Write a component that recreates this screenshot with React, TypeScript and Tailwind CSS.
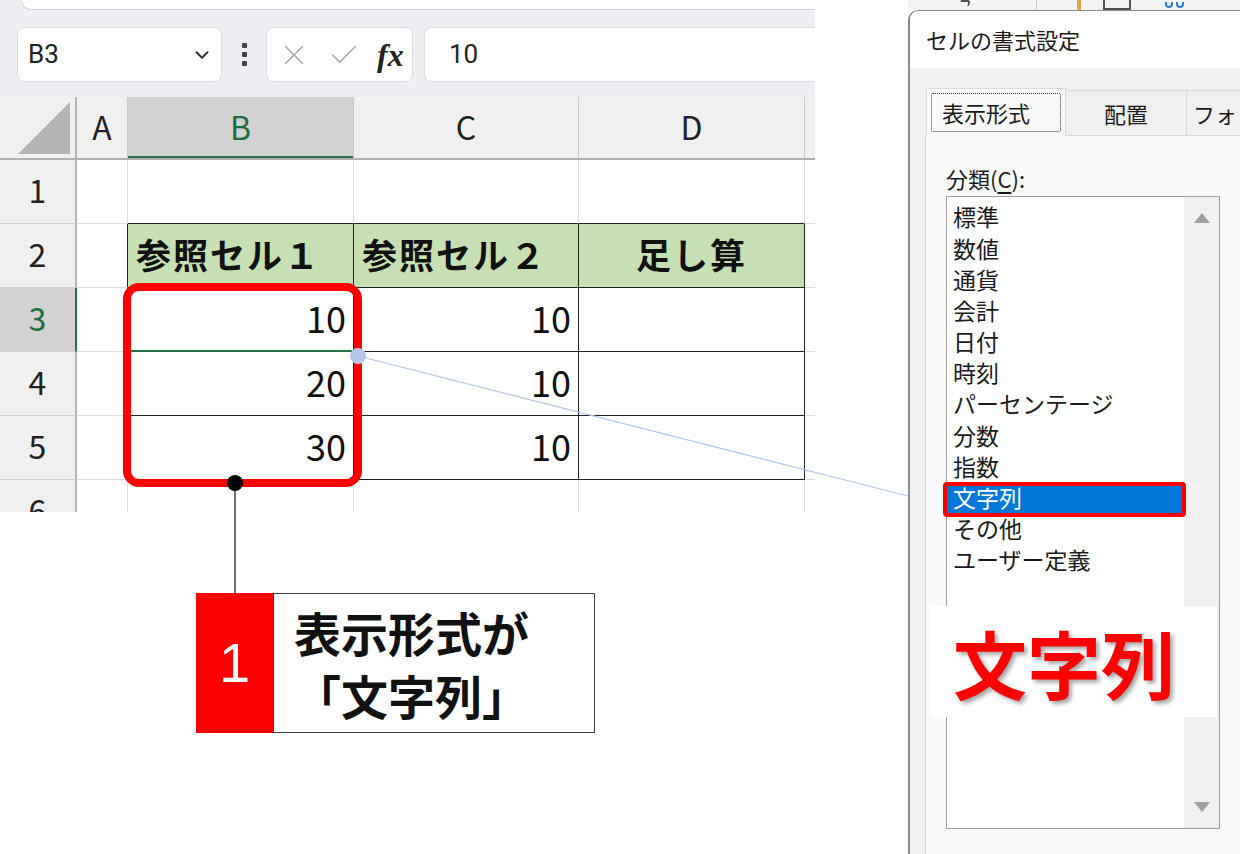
import { X, Check, ChevronDown } from 'lucide-react'

// Excel のシート部分 + 「セルの書式設定」ダイアログ + 注釈

const jp = "font-['Noto_Sans_CJK_JP',sans-serif]"

const GRID = 'border-[#dadada]'
const LINE = 'border-[#222]'

function Cell({ w, className = '', children }: { w: string; className?: string; children?: React.ReactNode }) {
  return <div className={`${w} h-full shrink-0 flex items-center ${className}`}>{children}</div>
}

function RowHead({ n, active }: { n: number; active?: boolean }) {
  return (
    <div
      className={`w-[77px] h-full shrink-0 flex items-center justify-center pb-[5px] text-[32px] border-b border-b-[#d0d0d0] ${
        active ? 'bg-[#d2d2d2] text-[#1e6e3e] border-r-2 border-r-[#217346]' : 'bg-[#f0f0f0] text-[#222] border-r-2 border-r-[#b4b4b4]'
      }`}
    >
      {n}
    </div>
  )
}

function Sheet() {
  const colHead = 'h-full shrink-0 flex items-center justify-center pb-[4px] text-[32px] text-[#222] border-r border-[#c8c8c8]'
  return (
    <div className={`w-[815px] h-[512px] overflow-hidden bg-white ${jp}`}>
      {/* リボン下端 */}
      <div className="h-[10px] bg-[#edeff2]">
        <div className="ml-[22px] h-[9px] bg-white rounded-bl-[12px] shadow-[0_1px_2px_rgba(0,0,0,0.15)]" />
      </div>

      {/* 数式バー */}
      <div className="h-[87px] bg-[#edeff2] flex items-start pt-[17px] pl-[17px] gap-0">
        <div className="w-[205px] h-[55px] bg-white rounded-[7px] border border-[#dcdcdc] flex items-center justify-between pl-[10px] pr-[8px]">
          <span className="text-[26px] text-[#222] font-['Roboto',sans-serif]">B3</span>
          <ChevronDown size={22} strokeWidth={2.2} color="#333" />
        </div>
        <div className="w-[44px] h-[55px] flex flex-col items-center justify-center gap-[4px]">
          <div className="w-[5px] h-[5px] rounded-[1px] bg-[#444]" />
          <div className="w-[5px] h-[5px] rounded-[1px] bg-[#444]" />
          <div className="w-[5px] h-[5px] rounded-[1px] bg-[#444]" />
        </div>
        <div className="w-[147px] h-[55px] bg-white rounded-[7px] border border-[#dcdcdc] flex items-center pl-[10px] gap-[16px]">
          <X size={34} strokeWidth={1.1} color="#a8a8a8" />
          <Check size={34} strokeWidth={1.1} color="#a8a8a8" />
          <span className="font-['Liberation_Serif',serif] italic font-bold text-[32px] text-[#222] leading-none">fx</span>
        </div>
        <div className="ml-[11px] flex-1 h-[55px] bg-white rounded-l-[7px] border border-r-0 border-[#dcdcdc] flex items-center pl-[24px]">
          <span className="text-[26px] text-[#222] font-['Roboto',sans-serif]">10</span>
        </div>
      </div>

      {/* 列見出し */}
      <div className="h-[63px] flex bg-[#f0f0f0] border-b-2 border-[#b0b0b0]">
        <div className="w-[77px] h-full shrink-0 border-r-2 border-[#b4b4b4] flex items-end justify-end pr-[5px] pb-[4px]">
          <svg width="52" height="52" viewBox="0 0 52 52">
            <polygon points="52,0 52,52 0,52" fill="#b4b4b4" />
          </svg>
        </div>
        <div className={`w-[51px] ${colHead}`}>A</div>
        <div className="w-[226px] h-full shrink-0 flex items-center justify-center pb-[4px] text-[32px] text-[#1e6e3e] bg-[#d2d2d2] border-r border-[#c8c8c8] shadow-[inset_0_-2px_0_#217346]">
          B
        </div>
        <div className={`w-[225px] ${colHead}`}>C</div>
        <div className={`w-[226px] ${colHead}`}>D</div>
        <div className="flex-1" />
      </div>

      {/* 1 */}
      <div className="h-[64px] flex">
        <RowHead n={1} />
        <Cell w="w-[51px]" className={`border-r border-b ${GRID}`} />
        <Cell w="w-[226px]" className={`border-r ${GRID} border-b border-b-[#222]`} />
        <Cell w="w-[225px]" className={`border-r ${GRID} border-b border-b-[#222]`} />
        <Cell w="w-[226px]" className={`border-r ${GRID} border-b border-b-[#222]`} />
        <div className={`flex-1 border-b ${GRID}`} />
      </div>

      {/* 2 */}
      <div className="h-[64px] flex">
        <RowHead n={2} />
        <Cell w="w-[51px]" className={`border-b ${GRID} border-r border-r-[#222]`} />
        <Cell w="w-[226px]" className={`bg-[#c6e0b4] border-r border-b ${LINE} pl-[8px] pb-[2px] text-[35px] font-bold tracking-[2px] text-[#111]`}>
          参照セル１
        </Cell>
        <Cell w="w-[225px]" className={`bg-[#c6e0b4] border-r border-b ${LINE} pl-[8px] pb-[2px] text-[35px] font-bold tracking-[2px] text-[#111]`}>
          参照セル２
        </Cell>
        <Cell w="w-[226px]" className={`bg-[#c6e0b4] border-r border-b ${LINE} justify-center pb-[2px] text-[35px] font-bold tracking-[2px] text-[#111]`}>
          足し算
        </Cell>
        <div className={`flex-1 border-b ${GRID}`} />
      </div>

      {/* 3〜5 */}
      {[
        { n: 3, a: '10', b: '10' },
        { n: 4, a: '20', b: '10' },
        { n: 5, a: '30', b: '10' },
      ].map((r) => (
        <div key={r.n} className="h-[64px] flex">
          <RowHead n={r.n} active={r.n === 3} />
          <Cell w="w-[51px]" className={`border-b ${GRID} border-r border-r-[#222]`} />
          <Cell
            w="w-[226px]"
            className={`border-r ${LINE} justify-end pr-[7px] pb-[5px] text-[36px] text-[#111] ${
              r.n === 3 ? 'border-b-2 border-b-[#217346]' : 'border-b border-b-[#222]'
            }`}
          >
            {r.a}
          </Cell>
          <Cell w="w-[225px]" className={`border-r border-b ${LINE} justify-end pr-[7px] pb-[5px] text-[36px] text-[#111]`}>
            {r.b}
          </Cell>
          <Cell w="w-[226px]" className={`border-r border-b ${LINE}`} />
          <div className={`flex-1 border-b ${GRID}`} />
        </div>
      ))}

      {/* 6 */}
      <div className="h-[64px] flex">
        <RowHead n={6} />
        <Cell w="w-[51px]" className={`border-r ${GRID}`} />
        <Cell w="w-[226px]" className={`border-r ${GRID}`} />
        <Cell w="w-[225px]" className={`border-r ${GRID}`} />
        <Cell w="w-[226px]" className={`border-r ${GRID}`} />
      </div>
    </div>
  )
}

const categories = ['標準', '数値', '通貨', '会計', '日付', '時刻', 'パーセンテージ', '分数', '指数', '文字列', 'その他', 'ユーザー定義']

function FormatDialog() {
  return (
    <div className={`relative w-[332px] h-full flex flex-col ${jp}`}>
      {/* 背後のリボンの一部 */}
      <div className="h-[10px] bg-[#f3f3f3] flex items-stretch">
        <div className="w-[52px]" />
        <div className="w-[10px] border-t-2 border-r-2 border-[#555] rounded-tr-[3px] -skew-x-12 h-[6px]" />
        <div className="w-[67px] border-r border-[#c8c8c8]" />
        <div className="w-[40px]" />
        <div className="w-[4px] bg-[#e8a33c]" />
        <div className="w-[22px]" />
        <div className="w-[28px] border-x-2 border-b-2 border-[#555]" />
        <div className="w-[34px]" />
        <div className="w-[20px] flex gap-[3px] items-end pb-[2px]">
          <div className="w-[8px] h-[6px] rounded-b-full border-2 border-t-0 border-[#2a7ad2]" />
          <div className="w-[8px] h-[6px] rounded-b-full border-2 border-t-0 border-[#2a7ad2]" />
        </div>
      </div>

      <div className="flex-1 flex flex-col rounded-tl-[10px] border-l-2 border-t border-[#8a8a8a] overflow-hidden">
        {/* タイトル */}
        <div className="h-[57px] bg-white flex items-center pl-[16px] text-[22px] text-[#1a1a1a]">セルの書式設定</div>

        <div className="flex-1 bg-[#f0f0f0] flex flex-col pt-[20px]">
          {/* タブ */}
          <div className="h-[47px] flex items-end pl-[16px] text-[22px] text-[#1a1a1a]">
            <div className="w-[140px] h-[48px] bg-[#f9f9f9] border border-b-0 border-[#d9d9d9] p-[4px] relative z-10 -mb-px">
              <div className="h-full border border-dotted border-[#333] rounded-[2px] flex items-center pl-[10px]">表示形式</div>
            </div>
            <div className="w-[121px] h-[45px] border-t border-r border-[#d9d9d9] flex items-center justify-center">配置</div>
            <div className="flex-1 h-[45px] border-t border-[#d9d9d9] flex items-center pl-[6px] whitespace-nowrap overflow-hidden">フォ</div>
          </div>

          {/* 表示形式ページ */}
          <div className="flex-1 ml-[15px] bg-[#f9f9f9] border-l border-t border-[#d9d9d9] pl-[20px] pt-[27px]">
            <div className="h-[30px] text-[22px] text-[#1a1a1a] leading-[30px]">
              分類(<span className="underline underline-offset-4">C</span>):
            </div>
            <div className="mt-[3px] w-[274px] h-[633px] bg-white border border-[#a0a0a0] flex">
              <div className="flex-1 pt-[4px]">
                {categories.map((c) => (
                  <div
                    key={c}
                    className={`h-[31.2px] flex items-center pl-[6px] text-[23px] ${
                      c === '文字列' ? 'bg-[#0078d7] text-white' : 'text-[#1a1a1a]'
                    }`}
                  >
                    {c}
                  </div>
                ))}
              </div>
              <div className="w-[35px] bg-[#f0f0f0] flex flex-col items-center justify-between py-[16px]">
                <svg width="16" height="10" viewBox="0 0 16 10">
                  <polygon points="8,0 16,10 0,10" fill="#a0a0a0" />
                </svg>
                <svg width="16" height="10" viewBox="0 0 16 10">
                  <polygon points="0,0 16,0 8,10" fill="#a0a0a0" />
                </svg>
              </div>
            </div>
          </div>
        </div>
      </div>

      {/* 選択項目の赤枠 */}
      <div className="absolute left-[35px] top-[482px] w-[243px] h-[35px] border-4 border-[#ff0000] rounded-[4px]" />

      {/* 大きな注釈 */}
      <div className="absolute left-[23px] top-[606px] w-[286px] h-[111px] bg-white flex items-center pl-[22px]">
        <span className="text-[74px] font-bold text-[#ff0000] leading-none [text-shadow:3px_3px_4px_rgba(0,0,0,0.35)]">文字列</span>
      </div>
    </div>
  )
}

export default function App() {
  return (
    <div className="relative w-[1240px] h-[854px] bg-white overflow-hidden flex">
      <div className="w-[908px] shrink-0 flex flex-col">
        <Sheet />

        {/* 番号付きコールアウト */}
        <div className={`mt-[81px] ml-[196px] flex h-[140px] ${jp}`}>
          <div className="w-[77px] bg-[#ff0000] flex items-center justify-center text-white text-[56px] font-light font-['Liberation_Sans',sans-serif]">
            1
          </div>
          <div className="w-[322px] bg-white border-[1.5px] border-[#404040] flex flex-col justify-center pl-[20px] text-[47px] font-bold text-[#111] leading-[63px]">
            <div>表示形式が</div>
            <div>「文字列」</div>
          </div>
        </div>
      </div>

      <FormatDialog />

      {/* 注釈の線と丸 */}
      <svg className="absolute left-0 top-0 pointer-events-none" width="908" height="854" viewBox="0 0 908 854">
        <rect x="127" y="287" width="231" height="196" rx="12" fill="none" stroke="#ff0000" strokeWidth="8" />
        <line x1="358" y1="356" x2="908" y2="496" stroke="#b4c6e7" strokeWidth="1.2" />
        <circle cx="358" cy="356" r="8" fill="#b4c6e7" />
        <line x1="235" y1="483" x2="235" y2="594" stroke="#111" strokeWidth="1.2" />
        <circle cx="235" cy="483" r="8" fill="#000" />
      </svg>
    </div>
  )
}
